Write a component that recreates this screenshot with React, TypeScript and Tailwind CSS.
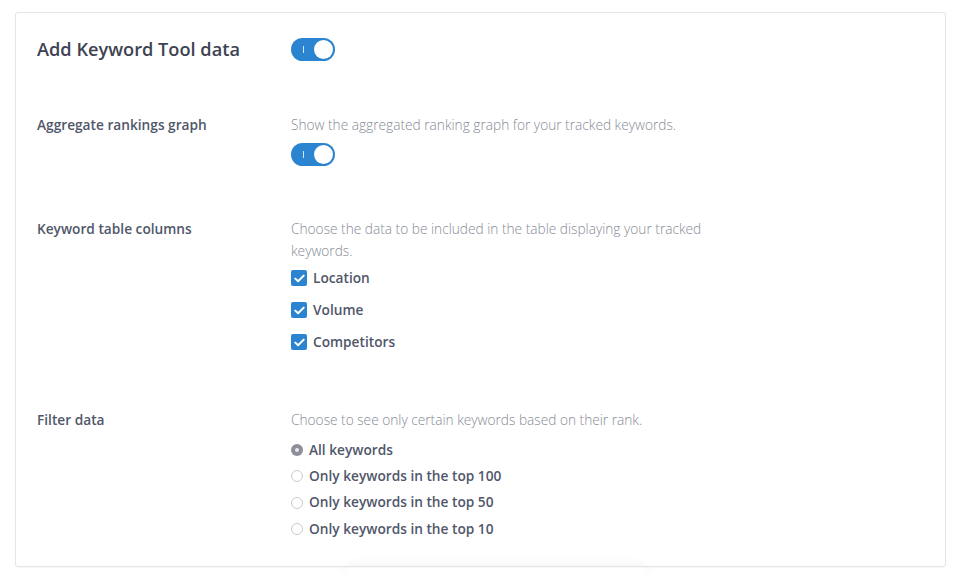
import { useState } from "react";

const font = { fontFamily: '"Open Sans", "Noto Sans", sans-serif' };

function Toggle({ on, onChange }: { on: boolean; onChange: () => void }) {
  return (
    <button
      type="button"
      onClick={onChange}
      className={
        on
          ? "relative flex h-[23px] w-[44px] items-center rounded-full bg-[#2a84d0]"
          : "relative flex h-[23px] w-[44px] items-center rounded-full bg-[#cfd3da]"
      }
    >
      <span className="absolute left-[12px] top-[8px] h-[7px] w-px bg-white/80" />
      <span
        className={
          on
            ? "absolute right-[2px] top-[2px] h-[19px] w-[19px] rounded-full bg-white"
            : "absolute left-[2px] top-[2px] h-[19px] w-[19px] rounded-full bg-white"
        }
      />
    </button>
  );
}

function Check({ label }: { label: string }) {
  const [on, setOn] = useState(true);
  return (
    <label className="flex h-[24px] cursor-pointer items-center gap-[6px]" onClick={() => setOn(!on)}>
      <span
        className={
          on
            ? "flex h-[16px] w-[16px] items-center justify-center rounded-[2px] bg-[#2a84d0]"
            : "flex h-[16px] w-[16px] items-center justify-center rounded-[2px] border border-[#c9ccd2] bg-white"
        }
      >
        {on && (
          <svg width="11" height="9" viewBox="0 0 11 9" fill="none">
            <path d="M1.3 4.6 4.1 7.3 9.7 1.6" stroke="white" strokeWidth="2" strokeLinecap="round" strokeLinejoin="round" />
          </svg>
        )}
      </span>
      <span className="text-[13.7px] font-semibold text-[#51576a]">{label}</span>
    </label>
  );
}

const sectionLabel = "text-[13.7px] font-semibold leading-[22px] text-[#51576a]";
const desc = "text-[13.7px] font-light leading-[22px] text-[#868b96]";

export default function App() {
  const [main, setMain] = useState(true);
  const [graph, setGraph] = useState(true);
  const [filter, setFilter] = useState("All keywords");
  const options = [
    "All keywords",
    "Only keywords in the top 100",
    "Only keywords in the top 50",
    "Only keywords in the top 10",
  ];

  return (
    <div className="min-h-screen bg-white pl-[15px] pt-[12px]" style={font}>
      <div className="relative w-[931px] rounded-[3px] border border-[#e3e5e9] bg-white px-[21px] pb-[24px] pt-[25px] shadow-[0_1px_2px_rgba(0,0,0,0.04)]">
        <div className="flex items-center">
          <h1 className="w-[254px] text-[18.2px] font-semibold leading-[23px] text-[#3d4352]">Add Keyword Tool data</h1>
          <Toggle on={main} onChange={() => setMain(!main)} />
        </div>

        <div className="mt-[53px] flex">
          <div className={`w-[254px] ${sectionLabel}`}>Aggregate rankings graph</div>
          <div>
            <p className={desc}>Show the aggregated ranking graph for your tracked keywords.</p>
            <div className="mt-[7px]">
              <Toggle on={graph} onChange={() => setGraph(!graph)} />
            </div>
          </div>
        </div>

        <div className="mt-[52px] flex">
          <div className={`w-[254px] ${sectionLabel}`}>Keyword table columns</div>
          <div>
            <p className={`max-w-[430px] ${desc}`}>
              Choose the data to be included in the table displaying your tracked keywords.
            </p>
            <div className="mt-[4px] flex flex-col gap-[8px]">
              <Check label="Location" />
              <Check label="Volume" />
              <Check label="Competitors" />
            </div>
          </div>
        </div>

        <div className="mt-[55px] flex">
          <div className={`w-[254px] ${sectionLabel}`}>Filter data</div>
          <div>
            <p className={desc}>Choose to see only certain keywords based on their rank.</p>
            <div className="mt-[6px] flex flex-col">
              {options.map((o) => (
                <label key={o} className="flex h-[26.3px] cursor-pointer items-center gap-[6px]" onClick={() => setFilter(o)}>
                  {filter === o ? (
                    <span className="flex h-[12px] w-[12px] items-center justify-center rounded-full bg-[#8c8f98]">
                      <span className="h-[4px] w-[4px] rounded-full bg-[#e8e9ec]" />
                    </span>
                  ) : (
                    <span className="h-[12px] w-[12px] rounded-full border border-[#c8cbd0] bg-white" />
                  )}
                  <span className="text-[13.7px] font-semibold text-[#51576a]">{o}</span>
                </label>
              ))}
            </div>
          </div>
        </div>
        <div className="pointer-events-none absolute -bottom-[10px] left-[330px] h-[10px] w-[300px] rounded-full bg-transparent shadow-[0_-2px_10px_rgba(0,0,0,0.05)]" />
      </div>
    </div>
  );
}
